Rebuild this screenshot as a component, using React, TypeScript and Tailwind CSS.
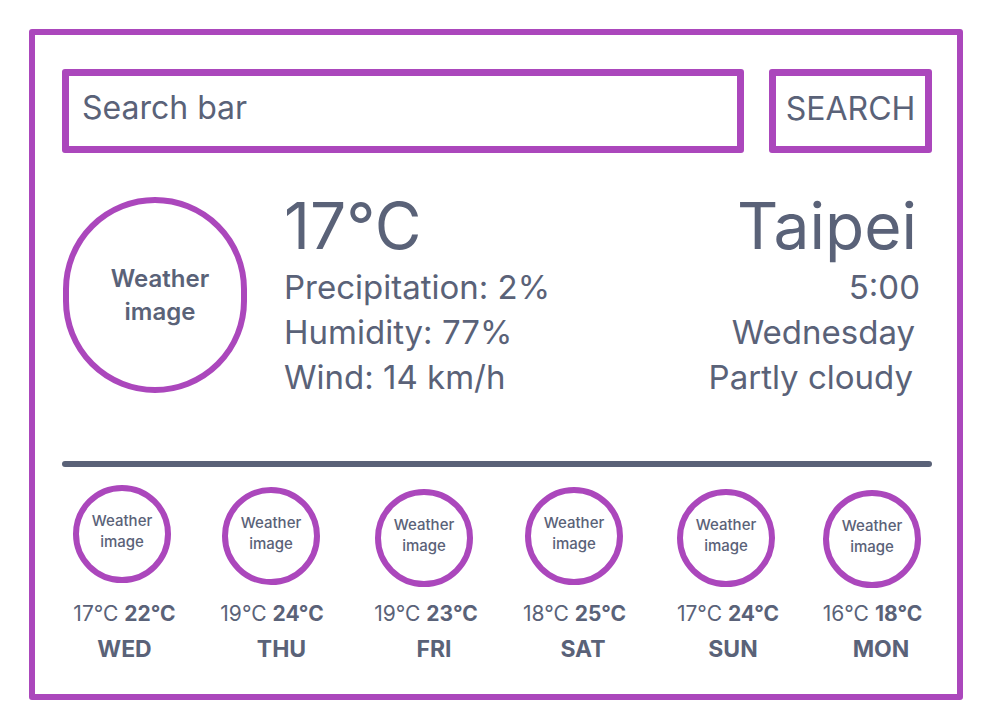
const forecast = [
  { day: "WED", low: "17°C", high: "22°C", top: "mt-0", c: "ml-0", t: "ml-[5px]", d: "ml-[5px]" },
  { day: "THU", low: "19°C", high: "24°C", top: "mt-[2px]", c: "-ml-[2px]", t: "ml-0", d: "ml-[19px]" },
  { day: "FRI", low: "19°C", high: "23°C", top: "mt-[4px]", c: "ml-[4px]", t: "ml-[8px]", d: "ml-[24px]" },
  { day: "SAT", low: "18°C", high: "25°C", top: "mt-[2px]", c: "ml-[4px]", t: "ml-[5px]", d: "ml-[22px]" },
  { day: "SUN", low: "17°C", high: "24°C", top: "mt-[4px]", c: "ml-[8px]", t: "ml-[12px]", d: "ml-[22px]" },
  { day: "MON", low: "16°C", high: "18°C", top: "mt-[5px]", c: "ml-0", t: "ml-[1px]", d: "ml-[18px]" },
];

const ForecastDay = ({ day, low, high, top, c, t, d }: (typeof forecast)[number]) => (
  <div className="flex flex-col items-center">
    <div className={`${c} h-[104px]`}>
      <div
        className={`${top} w-[98px] h-[98px] rounded-full border-[6px] border-[#ab47bc] flex items-center justify-center text-center text-[15px] leading-[21px] font-medium pb-[6px]`}
      >
        Weather
        <br />
        image
      </div>
    </div>
    <div className={`${t} mt-[13px] text-[21px] leading-[24px] whitespace-nowrap`}>
      {low} <span className="font-bold">{high}</span>
    </div>
    <div className={`${d} mt-[9px] text-[23px] leading-[28px] font-bold`}>{day}</div>
  </div>
);

export default function App() {
  return (
    <div
      className="w-[995px] h-[726px] bg-white pt-[29px] pl-[29px] text-[#5a6278]"
      style={{ fontFamily: "Inter, 'Noto Sans', sans-serif" }}
    >
      <div className="w-[934px] h-[671px] border-[6px] border-[#ab47bc] rounded-[3px] pt-[34px] pl-[27px] pr-[25px]">
        {/* search */}
        <div className="flex gap-[25px]">
          <div className="w-[682px] h-[84px] border-[7px] border-[#ab47bc] rounded-[3px] flex items-center pl-[13px] pb-[6px] text-[32px] leading-[32px]">
            Search bar
          </div>
          <div className="w-[163px] h-[84px] border-[7px] border-[#ab47bc] rounded-[3px] flex items-center justify-center pb-[4px] text-[32px] leading-[32px]">
            SEARCH
          </div>
        </div>

        {/* current weather */}
        <div className="flex mt-[41px]">
          <div className="ml-[1px] mt-[3px] w-[184px] h-[196px] shrink-0 rounded-full border-[6px] border-[#ab47bc] flex items-center justify-center text-center pl-[10px] text-[24px] leading-[33px] font-semibold">
            Weather
            <br />
            image
          </div>
          <div className="ml-[37px]">
            <div className="text-[64px] leading-[64px]">17°C</div>
            <div className="mt-[7px] text-[33px] leading-[45px]">
              <div>Precipitation: 2%</div>
              <div>Humidity: 77%</div>
              <div>Wind: 14 km/h</div>
            </div>
          </div>
          <div className="ml-auto mr-[12px] text-right">
            <div className="text-[64px] leading-[64px] mr-[3px]">Taipei</div>
            <div className="mt-[7px] text-[33px] leading-[45px]">
              <div>5:00</div>
              <div className="mr-[5px]">Wednesday</div>
              <div className="mr-[7px]">Partly cloudy</div>
            </div>
          </div>
        </div>

        <div className="mt-[61px] h-[6px] rounded-full bg-[#5a6278]" />

        {/* forecast */}
        <div className="mt-[18px] -ml-[15px] w-[900px] grid grid-cols-6">
          {forecast.map((f) => (
            <ForecastDay key={f.day} {...f} />
          ))}
        </div>
      </div>
    </div>
  );
}
